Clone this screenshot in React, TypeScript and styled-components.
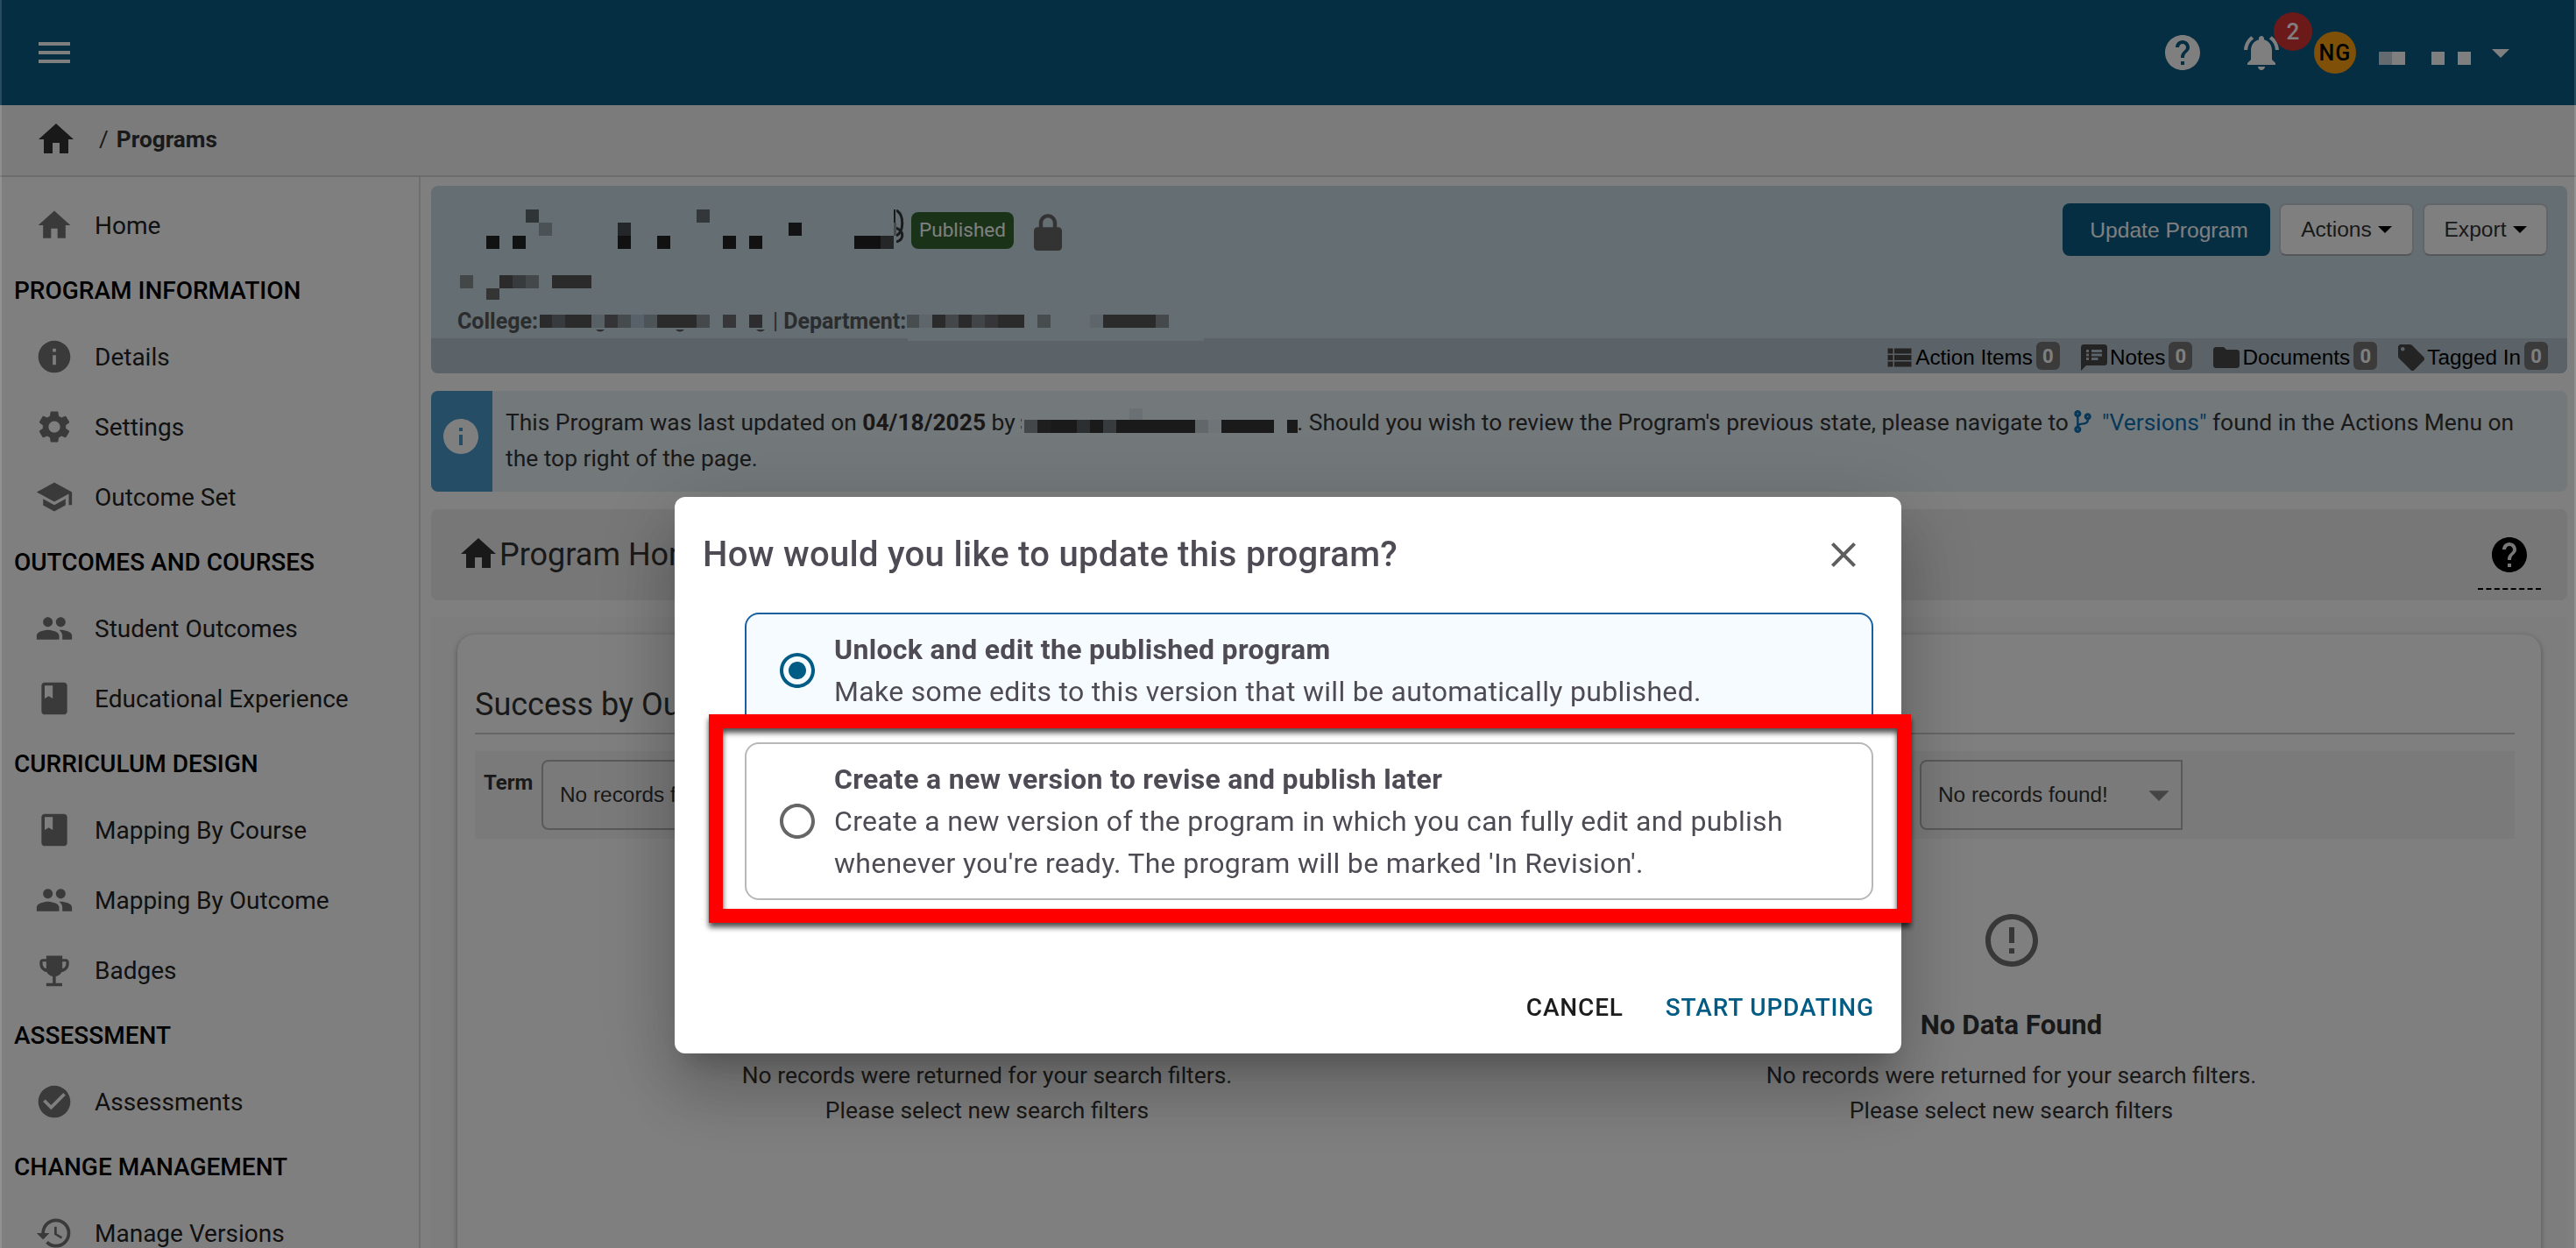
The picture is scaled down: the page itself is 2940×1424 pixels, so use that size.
import type { ReactNode } from 'react'
import styled, { createGlobalStyle } from 'styled-components'
import { FaCodeBranch } from 'react-icons/fa'
import {
  MdArrowDropDown,
  MdCheckCircle,
  MdClass,
  MdClose,
  MdErrorOutline,
  MdFolder,
  MdHelp,
  MdHistory,
  MdHome,
  MdInfo,
  MdLocalOffer,
  MdMenu,
  MdNotificationsActive,
  MdPeople,
  MdRadioButtonChecked,
  MdRadioButtonUnchecked,
  MdSchool,
  MdSettings,
  MdSpeakerNotes,
  MdViewList,
} from 'react-icons/md'

type Tile = [x: number, y: number, w: number, h: number, fill: string]

const titleTiles: Tile[] = [
  [78, 0, 15, 15, '#5e6a6e'],
  [273, 0, 15, 15, '#666f73'],
  [93, 15, 15, 15, '#96a4ac'],
  [183, 15, 15, 15, '#484e52'],
  [378, 15, 15, 15, '#242628'],
  [33, 30, 15, 15, '#222424'],
  [63, 30, 15, 15, '#222424'],
  [183, 30, 15, 15, '#222222'],
  [228, 30, 15, 15, '#222222'],
  [303, 30, 15, 15, '#222222'],
  [333, 30, 15, 15, '#222222'],
  [453, 30, 30, 15, '#222222'],
  [483, 30, 15, 15, '#484c50'],
  [498, 0, 2, 15, '#303438'],
  [498, 15, 3, 15, '#8c969a'],
]

const codeTiles: Tile[] = [
  [3, 0, 15, 15, '#868f90'],
  [48, 0, 15, 15, '#565659'],
  [63, 0, 15, 15, '#70767a'],
  [78, 0, 15, 15, '#889196'],
  [108, 0, 45, 15, '#565659'],
  [33, 15, 15, 13, '#68686a'],
]

const collegeTiles: Tile[] = [
  [0, 0, 14, 15, '#565659'],
  [14, 0, 15, 15, '#70767a'],
  [29, 0, 30, 15, '#565659'],
  [59, 0, 15, 15, '#acc0ca'],
  [74, 0, 15, 15, '#68696c'],
  [89, 0, 15, 15, '#8c979d'],
  [104, 0, 15, 15, '#b0c2d4'],
  [119, 0, 15, 15, '#9aa8ae'],
  [134, 0, 45, 15, '#565659'],
  [179, 0, 15, 15, '#8a9297'],
  [209, 0, 15, 15, '#6e6f72'],
  [239, 0, 15, 15, '#5a5b5e'],
]

const departmentTiles: Tile[] = [
  [0, 0, 14, 15, '#909ba0'],
  [14, 0, 15, 15, '#bccdd6'],
  [29, 0, 15, 15, '#565659'],
  [44, 0, 15, 15, '#868f93'],
  [59, 0, 15, 15, '#565659'],
  [74, 0, 15, 15, '#848b90'],
  [89, 0, 15, 15, '#6c6d70'],
  [104, 0, 30, 15, '#565659'],
  [149, 0, 15, 15, '#8e989d'],
  [209, 0, 15, 15, '#bccdd8'],
  [224, 0, 60, 15, '#565659'],
  [284, 0, 15, 15, '#8a9297'],
]

const authorTiles: Tile[] = [
  [4, 13, 15, 15, '#868e90'],
  [19, 13, 15, 15, '#3c3c3c'],
  [34, 13, 30, 15, '#343434'],
  [64, 13, 15, 15, '#565e62'],
  [79, 13, 15, 15, '#343434'],
  [94, 13, 15, 15, '#70767a'],
  [109, 13, 90, 15, '#343434'],
  [124, 0, 15, 13, '#d4e0e6'],
  [199, 13, 15, 15, '#c4ced4'],
  [214, 13, 15, 15, '#dce8ee'],
  [229, 13, 60, 15, '#343434'],
  [304, 13, 12, 15, '#343434'],
  [0, 12, 1, 3, '#788084'],
  [0, 20, 1, 3, '#788084'],
]

const userTiles: Tile[] = [
  [0, 0, 15, 15, '#c6d6e0'],
  [15, 0, 15, 15, '#ffffff'],
  [60, 0, 15, 15, '#ffffff'],
  [90, 0, 15, 15, '#ffffff'],
]

const navigation: { heading?: string; items: { icon: ReactNode; label: string }[] }[] = [
  { items: [{ icon: <MdHome />, label: 'Home' }] },
  {
    heading: 'PROGRAM INFORMATION',
    items: [
      { icon: <MdInfo />, label: 'Details' },
      { icon: <MdSettings />, label: 'Settings' },
      { icon: <MdSchool />, label: 'Outcome Set' },
    ],
  },
  {
    heading: 'OUTCOMES AND COURSES',
    items: [
      { icon: <MdPeople />, label: 'Student Outcomes' },
      { icon: <MdClass />, label: 'Educational Experience' },
    ],
  },
  {
    heading: 'CURRICULUM DESIGN',
    items: [
      { icon: <MdClass />, label: 'Mapping By Course' },
      { icon: <MdPeople />, label: 'Mapping By Outcome' },
      { icon: <TrophyIcon />, label: 'Badges' },
    ],
  },
  {
    heading: 'ASSESSMENT',
    items: [{ icon: <MdCheckCircle />, label: 'Assessments' }],
  },
  {
    heading: 'CHANGE MANAGEMENT',
    items: [{ icon: <MdHistory />, label: 'Manage Versions' }],
  },
]

const counters = [
  { icon: <MdViewList />, label: 'Action Items' },
  { icon: <MdSpeakerNotes />, label: 'Notes' },
  { icon: <MdFolder />, label: 'Documents' },
  { icon: <MdLocalOffer />, label: 'Tagged In' },
]

function TrophyIcon() {
  return (
    <svg viewBox="0 0 24 24" width="1em" height="1em" fill="currentColor">
      <path d="M7 3h10v2h2.2c1.100 0 1.900.9 1.900 2v1c0 2.700-1.800 4.700-4.400 5.100-.9 1.500-2.300 2.500-3.800 2.800V20h4v2H7v-2h4v-4.100c-1.500-.3-2.900-1.300-3.800-2.800C4.700 12.700 2.900 10.700 2.900 8V7c0-1.100.8-2 1.900-2H7V3zm0 3.700H4.700V8c0 1.400.9 2.600 2.300 3V6.700zm10 0V11c1.400-.4 2.300-1.600 2.300-3V6.700H17z" />
    </svg>
  )
}

// Padlock without the keyhole
function LockIcon() {
  return (
    <svg viewBox="0 0 24 24" width="1em" height="1em" fill="currentColor">
      <path d="M18 8.600h-.9V6.200c0-2.800-2.300-5.100-5.100-5.100S6.900 3.400 6.900 6.200v2.400H6c-1.100 0-2 .9-2 2V20c0 1.100.9 2 2 2h12c1.100 0 2-.9 2-2v-9.400c0-1.100-.9-2-2-2zm-3.100 0H9.100V6.200c0-1.600 1.300-2.900 2.900-2.900s2.900 1.300 2.900 2.900v2.400z" />
    </svg>
  )
}

function Mosaic({ tiles, width, height }: { tiles: Tile[]; width: number; height: number }) {
  return (
    <MosaicSvg width={width} height={height} shapeRendering="crispEdges" aria-hidden="true">
      {tiles.map(([x, y, w, h, fill]) => (
        <rect key={`${x}-${y}`} x={x} y={y} width={w} height={h} fill={fill} />
      ))}
    </MosaicSvg>
  )
}

function EmptyState() {
  return (
    <EmptyColumn>
      <MdErrorOutline />
      <EmptyTitle>No Data Found</EmptyTitle>
      <EmptyText>
        No records were returned for your search filters.
        <br />
        Please select new search filters
      </EmptyText>
    </EmptyColumn>
  )
}

function Filter() {
  return (
    <Select>
      <span>No records found!</span>
      <MdArrowDropDown />
    </Select>
  )
}

export default function App() {
  return (
    <Page>
      <GlobalStyle />

      <TopBar>
        <MdMenu />
        <UserArea>
          <MdHelp />
          <BellWrap>
            <MdNotificationsActive />
            <BellCount>2</BellCount>
          </BellWrap>
          <Avatar>NG</Avatar>
          <UserName>
            <Mosaic tiles={userTiles} width={105} height={15} />
          </UserName>
          <MdArrowDropDown />
        </UserArea>
      </TopBar>

      <Breadcrumb>
        <MdHome />
        <Slash>/</Slash>
        <strong>Programs</strong>
      </Breadcrumb>

      <Body>
        <Sidebar>
          {navigation.map(({ heading, items }) => (
            <div key={heading ?? 'top'}>
              {heading && <NavHeading>{heading}</NavHeading>}
              {items.map(({ icon, label }) => (
                <NavItem key={label}>
                  {icon}
                  <span>{label}</span>
                </NavItem>
              ))}
            </div>
          ))}
        </Sidebar>

        <Main>
          <ProgramCard>
            <ProgramTop>
              <div>
                <TitleRow>
                  <Mosaic tiles={titleTiles} width={501} height={45} />
                  <svg width="11" height="38" fill="none" stroke="#32363a" strokeWidth="3" aria-hidden="true">
                    <path d="M0 1c9 5 9 24 0 29M0 21c9 4 9 13 0 16" />
                  </svg>
                  <Status>Published</Status>
                  <LockWrap>
                    <LockIcon />
                  </LockWrap>
                </TitleRow>
                <Mosaic tiles={codeTiles} width={160} height={28} />
                <UnitRow>
                  <span>College:</span>
                  <CollegeName>
                    <Mosaic tiles={collegeTiles} width={260} height={15} />
                    <svg width="260" height="3" fill="#5a5e62" aria-hidden="true">
                      <path d="M64 0h10q-5 5-10 0zM155 0h10q-5 5-10 0zM247 0h10q-5 5-10 0z" />
                    </svg>
                  </CollegeName>
                  <Divider>|</Divider>
                  <span>Department:</span>
                  <Mosaic tiles={departmentTiles} width={300} height={15} />
                </UnitRow>
              </div>
              <ButtonRow>
                <PrimaryButton>Update Program</PrimaryButton>
                <MenuButton $width={154}>
                  Actions <Caret />
                </MenuButton>
                <MenuButton $width={143}>
                  Export <Caret />
                </MenuButton>
              </ButtonRow>
            </ProgramTop>
            <CounterBar>
              <CounterNotch />
              {counters.map(({ icon, label }) => (
                <Counter key={label}>
                  {icon}
                  <span>{label}</span>
                  <CounterBadge>0</CounterBadge>
                </Counter>
              ))}
            </CounterBar>
          </ProgramCard>

          <Notice>
            <NoticeIcon>
              <MdInfo />
            </NoticeIcon>
            <NoticeText>
              This Program was last updated on <strong>04/18/2025</strong> by{' '}
              <Mosaic tiles={authorTiles} width={316} height={28} />. Should you wish to review the
              Program's previous state, please navigate to{' '}
              <VersionsLink>
                <FaCodeBranch /> "Versions"
              </VersionsLink>{' '}
              found in the Actions Menu on
              <br />
              the top right of the page.
            </NoticeText>
          </Notice>

          <SectionBar>
            <MdHome />
            <SectionTitle>Program Home</SectionTitle>
            <HelpTip>
              <MdHelp />
            </HelpTip>
          </SectionBar>

          <Content>
            <Card>
              <CardTitle>Success by Outcome</CardTitle>
              <FilterBar>
                <FilterLabel>Term</FilterLabel>
                <Filter />
                <FilterGap />
                <Filter />
              </FilterBar>
              <EmptyGrid>
                <EmptyState />
                <EmptyState />
              </EmptyGrid>
            </Card>
          </Content>
        </Main>
      </Body>

      <Scrim>
        <Dialog role="dialog" aria-modal="true">
          <DialogHeader>
            <DialogTitle>How would you like to update this program?</DialogTitle>
            <MdClose />
          </DialogHeader>
          <Options>
            <Option $selected>
              <MdRadioButtonChecked />
              <div>
                <strong>Unlock and edit the published program</strong>
                <br />
                Make some edits to this version that will be automatically published.
              </div>
            </Option>
            <Option>
              <MdRadioButtonUnchecked />
              <div>
                <strong>Create a new version to revise and publish later</strong>
                <br />
                Create a new version of the program in which you can fully edit and publish
                <br />
                whenever you're ready. The program will be marked 'In Revision'.
              </div>
            </Option>
          </Options>
          <DialogActions>
            <DialogButton>CANCEL</DialogButton>
            <DialogButton $primary>START UPDATING</DialogButton>
          </DialogActions>
          <Highlight />
        </Dialog>
      </Scrim>
    </Page>
  )
}

const GlobalStyle = createGlobalStyle`
  * {
    box-sizing: border-box;
  }

  body {
    margin: 0;
    overflow: hidden;
  }
`

const Page = styled.div`
  display: flex;
  flex-direction: column;
  width: 2940px;
  height: 1424px;
  overflow: hidden;
  background: #fff;
  color: #333;
  font-family: Roboto, 'Liberation Sans', sans-serif;
  font-size: 26.4px;

  svg {
    flex-shrink: 0;
  }
`

const MosaicSvg = styled.svg`
  display: block;
`

const TopBar = styled.header`
  display: flex;
  flex-shrink: 0;
  align-items: center;
  justify-content: space-between;
  height: 120px;
  padding: 0 62px 0 38px;
  background: #0b5d86;
  color: #fff;
  font-size: 48px;
`

const UserArea = styled.div`
  display: flex;
  align-items: center;
`

const BellWrap = styled.div`
  position: relative;
  display: flex;
  margin-left: 42px;
`

const BellCount = styled.span`
  position: absolute;
  top: -22px;
  left: 38px;
  display: grid;
  place-items: center;
  width: 44px;
  height: 44px;
  border-radius: 50%;
  background: #d83333;
  font-size: 26px;
  font-weight: 500;
`

const Avatar = styled.div`
  display: grid;
  place-items: center;
  width: 48px;
  height: 48px;
  margin-left: 36px;
  border-radius: 50%;
  background: #ffa010;
  color: #000;
  font-size: 25px;
  font-weight: 500;
  letter-spacing: 1px;
`

const UserName = styled.div`
  margin: 12px 10px 0 26px;
`

const Breadcrumb = styled.nav`
  display: flex;
  flex-shrink: 0;
  align-items: center;
  height: 82px;
  padding: 0 0 2px 40px;
  border-bottom: 2px solid #d8d8d8;
  background: #f7f7f7;
  color: #333;
  font-size: 26.2px;

  svg {
    font-size: 48px;
  }
`

const Slash = styled.span`
  margin: 0 9px 0 25px;
`

const Body = styled.div`
  display: flex;
  flex: 1;
  min-height: 0;
`

const Sidebar = styled.aside`
  flex-shrink: 0;
  width: 480px;
  padding-top: 15px;
  overflow: hidden;
  border-right: 2px solid #dedede;
`

const NavHeading = styled.div`
  height: 70px;
  padding-left: 16px;
  color: #000;
  font-size: 28px;
  font-weight: 500;
  line-height: 70px;
`

const NavItem = styled.div`
  display: flex;
  align-items: center;
  gap: 24px;
  height: 80px;
  padding-left: 40px;
  color: #222;
  font-size: 28px;

  svg {
    color: #757575;
    font-size: 44px;
  }
`

const Main = styled.main`
  display: flex;
  flex: 1;
  flex-direction: column;
  min-width: 0;
  padding: 10px 10px 0 12px;
`

const ProgramCard = styled.section`
  flex-shrink: 0;
  height: 214px;
  overflow: hidden;
  border-radius: 8px;
  background: #cbdce6;
`

const ProgramTop = styled.div`
  display: flex;
  justify-content: space-between;
  height: 174px;
  padding: 20px 22px 0 30px;
`

const TitleRow = styled.div`
  display: flex;
  align-items: flex-start;
  height: 75px;
  margin-top: 7px;
`

const Status = styled.span`
  width: 117px;
  height: 42px;
  margin: 3px 0 0 6px;
  border-radius: 8px;
  background: #356730;
  color: #fff;
  font-size: 22.5px;
  line-height: 40px;
  text-align: center;
`

const LockWrap = styled.span`
  display: flex;
  margin: 3px 0 0 15px;
  color: #666;
  font-size: 48px;
`

const UnitRow = styled.div`
  display: flex;
  align-items: center;
  height: 40px;
  margin-top: 4px;
  color: #54585a;
  font-size: 25px;
  font-weight: 700;

  > svg {
    margin: 1px 0 0 1px;
  }
`

const CollegeName = styled.div`
  width: 260px;
  height: 20px;
  margin: 6px 6px 0 2px;

  svg + svg {
    display: block;
    margin-top: 2px;
  }
`

const Divider = styled.span`
  margin-right: 6px;
  font-weight: 400;
`

const ButtonRow = styled.div`
  display: flex;
  gap: 10px;
  font-family: 'Liberation Sans', sans-serif;
  font-size: 24.6px;
`

const PrimaryButton = styled.button`
  width: 237px;
  height: 60px;
  padding: 2px 0 0 6px;
  border: 0;
  border-radius: 8px;
  background: #0b5d86;
  color: #fff;
  font: inherit;
`

const MenuButton = styled.button<{ $width: number }>`
  display: flex;
  align-items: center;
  justify-content: center;
  gap: 7px;
  width: ${({ $width }) => $width}px;
  height: 60px;
  padding: 0;
  border: 2px solid #c4ccd0;
  border-bottom-color: #a8b0b4;
  border-radius: 8px;
  background: #fff;
  color: #333;
  font: inherit;
`

const Caret = styled.i`
  border: 8px solid transparent;
  border-top-color: #000;
  border-bottom: 0;
`

const CounterBar = styled.div`
  position: relative;
  display: flex;
  align-items: center;
  justify-content: flex-end;
  gap: 21px;
  height: 40px;
  padding-right: 22px;
  background: #b6c5d1;
  color: #000;
  font-family: 'Liberation Sans', sans-serif;
  font-size: 24.3px;
`

const CounterNotch = styled.i`
  position: absolute;
  top: 0;
  left: 544px;
  width: 338px;
  height: 3px;
  background: #cbdce6;
`

const Counter = styled.div`
  display: flex;
  align-items: center;
  height: 40px;

  svg {
    margin-top: 3px;
    color: #484848;
    font-size: 36px;
  }

  span {
    padding-top: 3px;
  }
`

const CounterBadge = styled.b`
  width: 27px;
  height: 32px;
  margin-left: 4px;
  border-radius: 6px;
  background: #777;
  color: #fff;
  font-family: Roboto, sans-serif;
  font-size: 22px;
  line-height: 33px;
  text-align: center;
`

const Notice = styled.section`
  display: flex;
  flex-shrink: 0;
  height: 115px;
  margin-top: 20px;
  overflow: hidden;
  border-radius: 8px;
  background: #e6f0f7;
`

const NoticeIcon = styled.div`
  width: 70px;
  padding: 28px 0 0 10px;
  background: #4b9bcd;
  color: #fff;
  font-size: 48px;
`

const NoticeText = styled.p`
  flex: 1;
  margin: 0;
  padding: 16px 0 0 15px;
  line-height: 41px;
  white-space: nowrap;

  ${MosaicSvg} {
    display: inline-block;
    margin-right: -1px;
    vertical-align: -3px;
  }
`

const VersionsLink = styled.a`
  color: #1170b0;

  svg {
    width: 20px;
    height: 26px;
    margin-right: 5px;
    vertical-align: -3px;
  }
`

const SectionBar = styled.div`
  display: flex;
  flex-shrink: 0;
  align-items: center;
  height: 104px;
  margin-top: 20px;
  padding: 0 30px;
  border-radius: 8px;
  background: #eee;

  > svg {
    margin-top: -2px;
    font-size: 48px;
  }
`

const SectionTitle = styled.h2`
  flex: 1;
  margin: 0;
  font-size: 36px;
  font-weight: 400;
`

const HelpTip = styled.div`
  display: flex;
  justify-content: center;
  width: 72px;
  height: 64px;
  margin-top: 16px;
  border-bottom: 2px dashed #000;
  color: #000;
  font-size: 48px;
`

const Content = styled.div`
  flex: 1;
  min-height: 0;
  margin-top: 19px;
  padding: 20px 30px 0;
  background: #fafafa;
`

const Card = styled.section`
  height: 760px;
  padding: 54px 30px 0 20px;
  border-radius: 20px;
  background: #fff;
  box-shadow: 0 2px 6px rgba(0, 0, 0, 0.35);
`

const CardTitle = styled.h3`
  height: 60px;
  margin: 0;
  border-bottom: 2px solid #ccc;
  font-size: 36px;
  font-weight: 400;
  line-height: 53px;
`

const FilterBar = styled.div`
  display: flex;
  height: 100px;
  margin-top: 19px;
  padding: 10px;
  background: #f5f5f5;
`

const FilterLabel = styled.strong`
  width: 66px;
  padding-top: 10px;
  font-size: 24px;
  line-height: 32px;
`

const FilterGap = styled.div`
  width: 1273px;
`

const Select = styled.div`
  display: flex;
  align-items: center;
  justify-content: space-between;
  width: 300px;
  height: 80px;
  padding-left: 19px;
  border: 2px solid #b4b4b4;
  border-radius: 8px 0 0 8px;
  font-family: 'Liberation Sans', sans-serif;
  font-size: 24.4px;

  svg {
    width: 56px;
    height: 56px;
    margin-right: -3px;
    color: #8a8a8a;
  }
`

const EmptyGrid = styled.div`
  display: grid;
  grid-template-columns: 1fr 1fr;
  margin-right: -10px;
  padding-top: 80px;
`

const EmptyColumn = styled.div`
  display: flex;
  flex-direction: column;
  align-items: center;

  svg {
    color: #707070;
    font-size: 72px;
  }
`

const EmptyTitle = styled.div`
  margin-top: 42px;
  font-size: 31.4px;
  font-weight: 700;
  line-height: 38px;
`

const EmptyText = styled.p`
  margin: 18px 0 0;
  line-height: 40px;
  text-align: center;
`

const Scrim = styled.div`
  position: fixed;
  inset: 0;
  display: flex;
  align-items: flex-start;
  justify-content: center;
  padding-top: 567px;
  border: solid rgba(255, 255, 255, 0.14);
  border-width: 0 2px;
  background: rgba(0, 0, 0, 0.5);
`

const Dialog = styled.div`
  position: relative;
  display: flex;
  flex-direction: column;
  width: 1400px;
  height: 635px;
  border-radius: 12px;
  background: #fff;
  color: #4f4b55;
  box-shadow:
    0 22px 30px -14px rgba(0, 0, 0, 0.2),
    0 48px 76px 6px rgba(0, 0, 0, 0.14),
    0 18px 92px 16px rgba(0, 0, 0, 0.12);
`

const DialogHeader = styled.header`
  display: flex;
  align-items: center;
  justify-content: space-between;
  height: 132px;
  padding: 0 42px 0 32px;

  svg {
    color: #5e5e5e;
    font-size: 48px;
  }
`

const DialogTitle = styled.h1`
  margin: -2px 0 0;
  font-size: 40px;
  font-weight: 500;
  letter-spacing: 0.3px;
`

const Options = styled.div`
  display: flex;
  flex: 1;
  flex-direction: column;
  gap: 16px;
  padding: 0 32px 0 80px;
`

const Option = styled.div<{ $selected?: boolean }>`
  display: flex;
  align-items: center;
  gap: 18px;
  padding: 16px 0 16px 34px;
  border: 2px solid ${({ $selected }) => ($selected ? '#1860a0' : '#b8b8b8')};
  border-radius: 16px;
  background: ${({ $selected }) => ($selected ? '#f5fbff' : '#fff')};
  font-size: 32px;
  letter-spacing: 0.31px;
  line-height: 48px;
  white-space: nowrap;

  svg {
    color: ${({ $selected }) => ($selected ? '#005b85' : '#666')};
    font-size: 48px;
  }
`

const DialogActions = styled.footer`
  display: flex;
  align-items: center;
  justify-content: flex-end;
  gap: 48px;
  height: 106px;
  padding-right: 31px;
`

const DialogButton = styled.button<{ $primary?: boolean }>`
  padding: 0;
  border: 0;
  background: none;
  color: ${({ $primary }) => ($primary ? '#005b85' : '#1c1c1c')};
  font: 500 28px Roboto, sans-serif;
  letter-spacing: 0.85px;
`

// Marks the option the guide refers to
const Highlight = styled.i`
  position: absolute;
  top: 248px;
  left: 39px;
  width: 1372px;
  height: 238px;
  border: 16px solid #f00;
  filter: drop-shadow(0 5px 3px rgba(0, 0, 0, 0.7));
  pointer-events: none;
`
